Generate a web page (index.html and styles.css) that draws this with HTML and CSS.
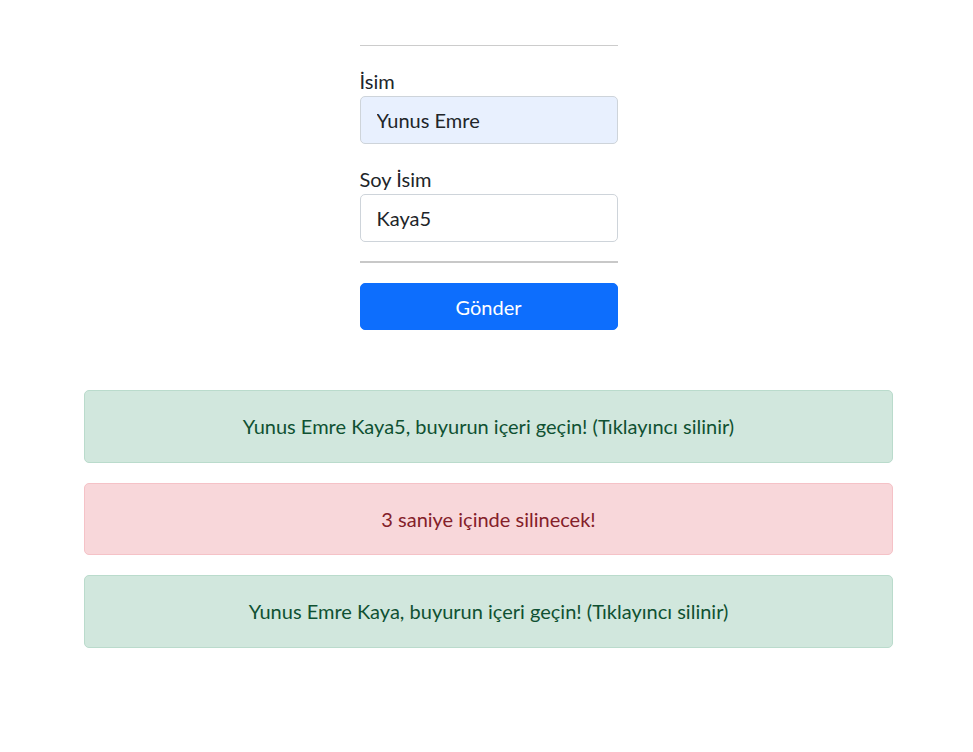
FILE: index.html
```html
<!DOCTYPE html>
<html lang="tr">
<head>
<meta charset="utf-8">
<title>Form</title>
<link rel="stylesheet" href="styles.css">
</head>
<body>
<div class="page">
  <form class="form">
    <hr class="rule">
    <div class="group">
      <label class="label" for="isim">İsim</label>
      <input class="input input-filled" id="isim" type="text" value="Yunus Emre">
    </div>
    <div class="group">
      <label class="label" for="soyisim">Soy İsim</label>
      <input class="input" id="soyisim" type="text" value="Kaya5">
    </div>
    <hr class="rule rule-thick">
    <button class="btn" type="button">Gönder</button>
  </form>
  <div class="alerts">
    <div class="alert alert-success">Yunus Emre Kaya5, buyurun içeri geçin! (Tıklayıncı silinir)</div>
    <div class="alert alert-danger">3 saniye içinde silinecek!</div>
    <div class="alert alert-success">Yunus Emre Kaya, buyurun içeri geçin! (Tıklayıncı silinir)</div>
  </div>
</div>
</body>
</html>
```

FILE: styles.css
```css
* { box-sizing: border-box; }
html, body { margin: 0; background: #fff; }
body {
  font-family: "Segoe UI", Lato, "Noto Sans", sans-serif;
  font-size: 20px;
  line-height: 1.5;
  color: #212529;
}
.page {
  padding-left: 4px;
}
.form {
  width: 258px;
  margin: 0 auto;
  padding-top: 45px;
  display: flex;
  flex-direction: column;
  gap: 20px;
}
.rule {
  margin: 0;
  border: 0;
  border-top: 1px solid #cccccc;
  height: 0;
}
.rule-thick {
  border-top: 2px solid #c8c8c8;
  margin-top: -1px;
}
.group {
  display: flex;
  flex-direction: column;
}
.label {
  display: block;
  font-size: 20px;
  line-height: 30px;
  color: #212529;
}
.input {
  display: block;
  width: 100%;
  height: 48px;
  padding: 8px 16px;
  font: inherit;
  font-size: 20px;
  line-height: 30px;
  color: #212529;
  background: #fff;
  border: 1px solid #ced4da;
  border-radius: 5px;
  outline: none;
}
.input-filled {
  background: #e8f0fe;
}
.btn {
  display: block;
  width: 100%;
  height: 47px;
  padding: 8px 16px;
  font: inherit;
  font-size: 20px;
  line-height: 30px;
  color: #fff;
  background: #0d6efd;
  border: 1px solid #0d6efd;
  border-radius: 5px;
}
.alerts {
  width: 809px;
  margin: 60px auto 0;
  display: flex;
  flex-direction: column;
  gap: 20px;
}
.alert {
  padding: 20px 16px 21px;
  border: 1px solid transparent;
  border-radius: 5px;
  text-align: center;
  font-size: 20px;
  line-height: 30px;
}
.alert-danger {
  padding-bottom: 20px;
}
.alert-success {
  color: #0f5132;
  background: #d1e7dd;
  border-color: #badbcc;
}
.alert-danger {
  color: #842029;
  background: #f8d7da;
  border-color: #f5c2c7;
}
```
